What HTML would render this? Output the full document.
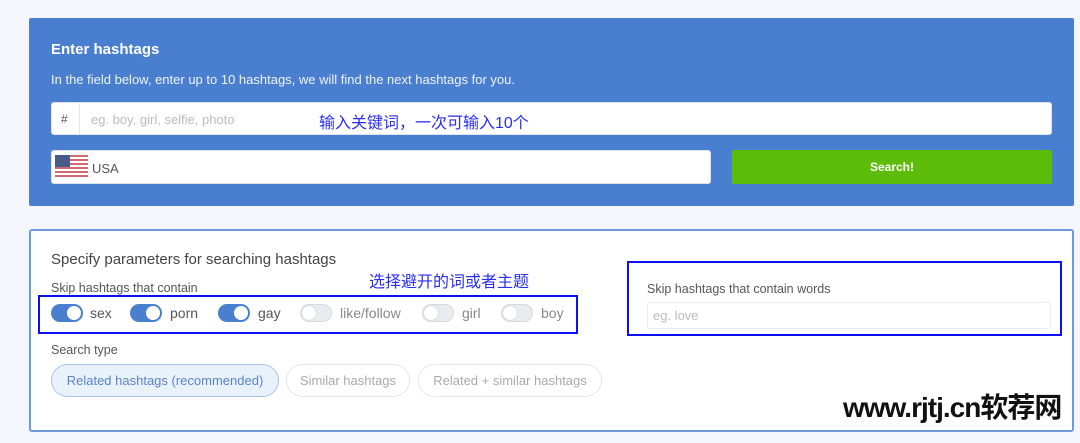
<!DOCTYPE html>
<html><head><meta charset="utf-8"><style>
*{box-sizing:border-box;margin:0;padding:0}
body{width:1080px;height:443px;background:#f4f6fb;font-family:"Liberation Sans","Noto Sans CJK SC",sans-serif;position:relative;overflow:hidden}
.a{position:absolute}
.blue{left:29px;top:18px;width:1045px;height:188px;background:#4a7fd0;border-radius:2px}
.white{left:29px;top:229px;width:1045px;height:203px;background:#fff;border:2px solid #6d9ad8;border-radius:3px}
.inp{background:#fff;border:1px solid #dde3ec;border-radius:3px}
.tog{width:32px;height:18px;border-radius:9px;background:#4a7fd0;position:absolute}
.tog::after{content:"";position:absolute;top:2px;right:2px;width:14px;height:14px;border-radius:50%;background:#fff}
.off{background:#e9ebef;border:1px solid #d6d9df}
.off::after{left:1px;top:1px;right:auto;box-shadow:0 0 1px #999}
.lbl{font-size:14px;color:#555}
.pill{height:33px;border-radius:17px;border:1px solid #e3e6ec;font-size:13px;color:#aaa;line-height:31px;text-align:center}
</style></head><body>
<div class="a blue"></div>
<div class="a" style="left:51px;top:41px;font-size:15px;font-weight:bold;color:#fff">Enter hashtags</div>
<div class="a" style="left:51px;top:72px;font-size:13px;color:#eef3fb">In the field below, enter up to 10 hashtags, we will find the next hashtags for you.</div>
<div class="a inp" style="left:51px;top:102px;width:1001px;height:33px"></div>
<div class="a" style="left:79px;top:103px;width:1px;height:31px;background:#e3e6ec"></div>
<div class="a" style="left:61px;top:112px;font-size:12px;color:#555">#</div>
<div class="a" style="left:91px;top:112px;font-size:13px;color:#bbb">eg. boy, girl, selfie, photo</div>
<div class="a" style="left:319px;top:109px;font-size:16px;color:#2a2ef0">输入关键词，一次可输入10个</div>
<div class="a inp" style="left:51px;top:150px;width:660px;height:34px"></div>
<svg class="a" style="left:55px;top:155px" width="33" height="24"><rect width="33" height="24" fill="#fff"/><g fill="#d06a70"><rect y="0" width="33" height="2"/><rect y="4" width="33" height="2"/><rect y="8" width="33" height="2"/><rect y="12" width="33" height="2"/><rect y="16" width="33" height="2"/><rect y="20" width="33" height="2"/></g><rect width="15" height="12" fill="#4a5a88"/></svg>
<div class="a" style="left:92px;top:161px;font-size:13px;color:#555">USA</div>
<div class="a" style="left:732px;top:150px;width:320px;height:34px;background:#5dbb0a;border-radius:2px;color:#fff;font-size:12px;font-weight:bold;text-align:center;line-height:34px">Search!</div>

<div class="a white"></div>
<div class="a" style="left:51px;top:251px;font-size:15px;color:#444">Specify parameters for searching hashtags</div>
<div class="a" style="left:369px;top:268px;font-size:16px;color:#2a2ef0">选择避开的词或者主题</div>
<div class="a" style="left:51px;top:281px;font-size:12.5px;color:#555">Skip hashtags that contain</div>
<div class="a" style="left:38px;top:295px;width:540px;height:39px;border:2px solid #0a10f0"></div>
<div class="tog" style="left:51px;top:304px"></div><div class="a lbl" style="left:90px;top:305px">sex</div>
<div class="tog" style="left:130px;top:304px"></div><div class="a lbl" style="left:170px;top:305px">porn</div>
<div class="tog" style="left:218px;top:304px"></div><div class="a lbl" style="left:258px;top:305px">gay</div>
<div class="tog off" style="left:300px;top:304px"></div><div class="a lbl" style="left:340px;top:305px;color:#888">like/follow</div>
<div class="tog off" style="left:422px;top:304px"></div><div class="a lbl" style="left:462px;top:305px;color:#888">girl</div>
<div class="tog off" style="left:501px;top:304px"></div><div class="a lbl" style="left:541px;top:305px;color:#888">boy</div>
<div class="a" style="left:51px;top:343px;font-size:12.5px;color:#555">Search type</div>
<div class="a pill" style="left:51px;top:364px;width:228px;background:#e9f1fb;border-color:#a8c4ea;color:#5a84c8">Related hashtags (recommended)</div>
<div class="a pill" style="left:286px;top:364px;width:124px">Similar hashtags</div>
<div class="a pill" style="left:418px;top:364px;width:184px">Related + similar hashtags</div>

<div class="a" style="left:627px;top:261px;width:435px;height:75px;border:2px solid #0a10f0"></div>
<div class="a" style="left:647px;top:282px;font-size:12.5px;color:#555">Skip hashtags that contain words</div>
<div class="a inp" style="left:647px;top:302px;width:404px;height:27px;border-color:#e8ebf0"></div>
<div class="a" style="left:653px;top:308px;font-size:13px;color:#bbb">eg. love</div>
<div class="a" style="left:843px;top:386px;font-size:28px;font-weight:bold;color:#111;letter-spacing:-1px">www.rjtj.cn软荐网</div>
</body></html>
